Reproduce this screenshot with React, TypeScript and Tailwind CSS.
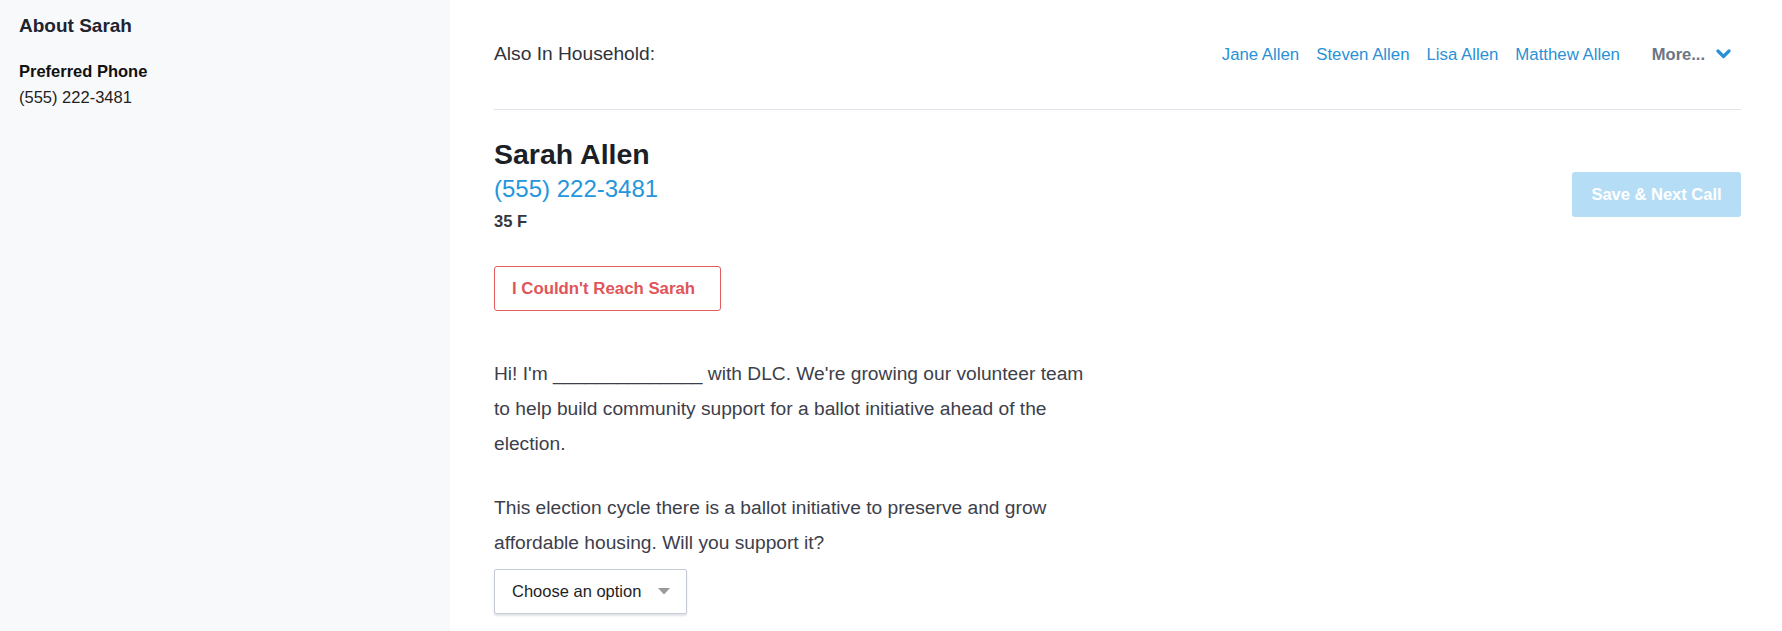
import React from "react";

export default function App() {
  const members = ["Jane Allen", "Steven Allen", "Lisa Allen", "Matthew Allen"];
  return (
    <div className="flex min-h-[631px] w-full bg-white font-['Liberation_Sans',Arial,sans-serif]">
      <aside className="w-[450px] shrink-0 bg-[#f8f9fb] pl-[19px] pt-[14px]">
        <h2 className="text-[19px] font-bold leading-[24px] text-[#1f2430]">About Sarah</h2>
        <div className="mt-[23px] text-[16.5px] font-bold leading-[20px] text-[#111]">Preferred Phone</div>
        <div className="mt-[6px] text-[16.5px] leading-[20px] text-[#222]">(555) 222-3481</div>
      </aside>

      <main className="flex-1 pl-[44px] pr-[41px]">
        <div className="flex h-[110px] items-center justify-between border-b border-[#dfe5ea]">
          <span className="text-[19.2px] text-[#2f333b]">Also In Household:</span>
          <div className="mr-[10px] flex items-center">
            <div className="flex items-center gap-[17px]">
              {members.map((m) => (
                <a key={m} className="cursor-pointer text-[16.8px] text-[#2a91d6]">
                  {m}
                </a>
              ))}
            </div>
            <span className="ml-[32px] text-[16.5px] font-bold text-[#6c7584]">More...</span>
            <svg className="ml-[11px] -mt-[2px]" width="15" height="10" viewBox="0 0 15 10">
              <polyline points="2,2 7.5,7.5 13,2" fill="none" stroke="#2a91d6" strokeWidth="3.2" strokeLinecap="round" strokeLinejoin="round" />
            </svg>
          </div>
        </div>

        <div className="flex items-start justify-between pt-[28px]">
          <div>
            <h1 className="text-[28.5px] font-bold leading-[33px] text-[#1b1f27]">Sarah Allen</h1>
            <div className="mt-[4px] text-[24px] leading-[28px] text-[#2496dc]">(555) 222-3481</div>
            <div className="mt-[8px] text-[16.5px] font-bold leading-[20px] text-[#333740]">35 F</div>
          </div>
          <button className="mt-[34px] h-[45px] w-[169px] rounded-[3px] bg-[#b5def6] text-[16.5px] font-bold text-white">
            Save &amp; Next Call
          </button>
        </div>

        <button className="mt-[35px] flex h-[45px] w-[227px] items-center rounded-[3px] border border-[#e35d60] bg-white pl-[17px] text-[16.8px] font-bold text-[#e0555a]">
          I Couldn't Reach Sarah
        </button>

        <p className="mt-[45px] max-w-[600px] text-[19.2px] leading-[35px] text-[#3c404b]">
          Hi! I'm ______________ with DLC. We're growing our volunteer team to help build community support for a ballot initiative ahead of the election.
        </p>
        <p className="mt-[29px] max-w-[600px] text-[19.2px] leading-[35px] text-[#3c404b]">
          This election cycle there is a ballot initiative to preserve and grow affordable housing. Will you support it?
        </p>

        <div className="mt-[9px] flex h-[45px] w-[193px] items-center justify-between rounded-[2px] border border-[#c4cbd6] bg-white pl-[17px] pr-[16px] shadow-[0_2px_2px_rgba(60,70,90,0.15)]">
          <span className="text-[16.5px] text-[#1e1e1e]">Choose an option</span>
          <svg width="12" height="7" viewBox="0 0 12 7">
            <polygon points="0,0 12,0 6,6.5" fill="#9a9a9a" />
          </svg>
        </div>
      </main>
    </div>
  );
}
